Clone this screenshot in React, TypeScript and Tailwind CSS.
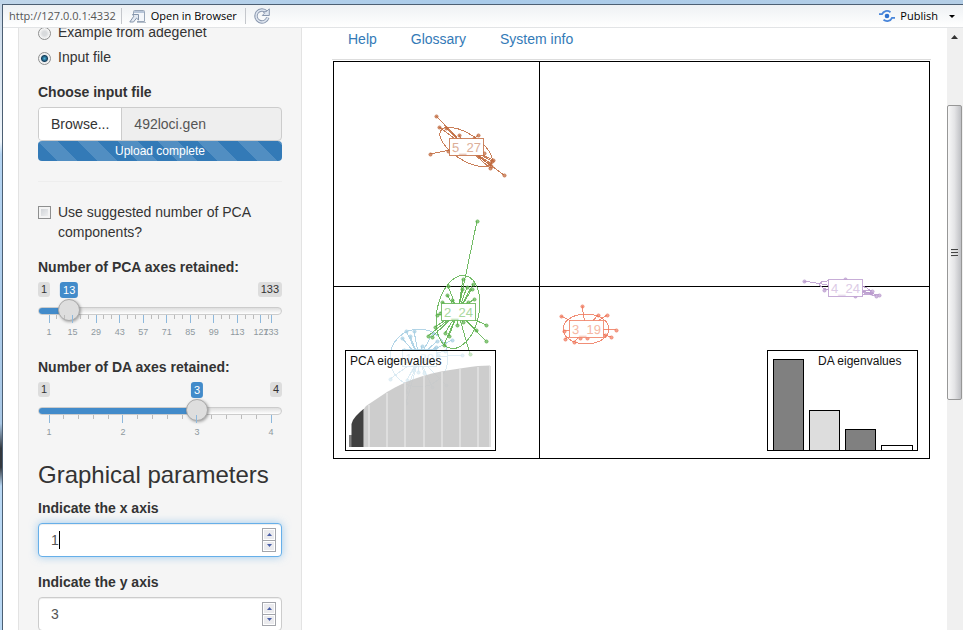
import type { ReactNode } from "react";

type Point = [number, number];

interface Cluster {
  name: string;
  color: string;
  text: string;
  center: Point;
  ellipse: { rx: number; ry: number; angle: number };
  points: Point[];
}

const clusters: Cluster[] = [
  {
    name: "1_39",
    color: "#a6cee3",
    text: "#c4dfec",
    center: [419, 358],
    ellipse: { rx: 29, ry: 29, angle: 0 },
    points: [
      [406, 331], [414, 331], [410, 336], [402, 338], [433, 333], [437, 341],
      [452, 340], [422, 346], [436, 347], [404, 350], [462, 355], [445, 351],
      [438, 355], [390, 379], [407, 380], [446, 385], [432, 387], [406, 392],
      [406, 403], [418, 372], [424, 373], [413, 370],
    ],
  },
  {
    name: "2_24",
    color: "#5cb04c",
    text: "#a8d89d",
    center: [458, 312],
    ellipse: { rx: 37, ry: 21, angle: -78 },
    points: [
      [477, 221], [463, 279], [473, 284], [448, 286], [462, 289], [467, 287],
      [472, 289], [447, 295], [474, 299], [442, 302], [452, 300], [468, 302],
      [437, 315], [440, 313], [486, 325], [486, 341], [476, 330], [470, 354],
      [435, 327], [428, 336], [432, 337], [445, 333], [449, 336], [444, 345],
      [457, 325], [463, 322],
    ],
  },
  {
    name: "3_19",
    color: "#ef7a5e",
    text: "#f6b8a4",
    center: [586, 329],
    ellipse: { rx: 23, ry: 15, angle: 0 },
    points: [
      [582, 306], [561, 316], [598, 315], [607, 315], [564, 331], [565, 339],
      [574, 342], [580, 338], [587, 338], [616, 330], [611, 337], [605, 335],
    ],
  },
  {
    name: "4_24",
    color: "#b999cd",
    text: "#dccbe6",
    center: [845, 288],
    ellipse: { rx: 26, ry: 6, angle: 9 },
    points: [
      [804, 281], [824, 290], [845, 279], [855, 296], [872, 291], [876, 296],
      [879, 295], [871, 293],
    ],
  },
  {
    name: "5_27",
    color: "#c0683c",
    text: "#dcae98",
    center: [466, 147],
    ellipse: { rx: 30, ry: 13, angle: 33 },
    points: [
      [436, 116], [439, 127], [446, 128], [459, 135], [474, 138], [478, 135],
      [430, 154], [448, 151], [484, 153], [493, 160], [490, 168], [504, 175],
      [490, 163], [491, 166], [492, 161],
    ],
  },
];

function ClusterMark({ cluster }: { cluster: Cluster }) {
  const [cx, cy] = cluster.center;
  const { rx, ry, angle } = cluster.ellipse;
  return (
    <g>
      <g stroke={cluster.color} strokeOpacity="0.85" fill="none" shapeRendering="crispEdges">
        {cluster.points.map(([x, y], i) => (
          <line key={i} x1={cx} y1={cy} x2={x} y2={y} />
        ))}
        <ellipse cx={cx} cy={cy} rx={rx} ry={ry} transform={`rotate(${angle} ${cx} ${cy})`} />
      </g>
      {cluster.points.map(([x, y], i) => (
        <circle key={i} cx={x + 0.5} cy={y + 0.5} r="1.6" fill={cluster.color} fillOpacity="0.7" stroke={cluster.color} strokeWidth="0.7" />
      ))}
      <rect x={cx - 16.5} y={cy - 8.5} width="34" height="17" fill="white" stroke={cluster.color} strokeOpacity="0.8" />
      <text x={cx + 0.5} y={cy + 5} fontSize="13" textAnchor="middle" fill={cluster.text} textRendering="geometricPrecision">
        {cluster.name}
      </text>
    </g>
  );
}

const daBars = [
  { x: 773.5, y: 359.5, w: 30, fill: "#808080" },
  { x: 809.5, y: 410.5, w: 30, fill: "#dddddd" },
  { x: 845.5, y: 429.5, w: 30, fill: "#808080" },
  { x: 881.5, y: 445.5, w: 31, fill: "#ffffff" },
];

const pcaStripes = [
  { x: 368, top: 405 },
  { x: 386, top: 393 },
  { x: 404, top: 383 },
  { x: 423, top: 376 },
  { x: 441, top: 372 },
  { x: 459, top: 369 },
  { x: 477, top: 367 },
  { x: 489, top: 366 },
];

function ScatterPlot() {
  return (
    <svg viewBox="332 60 599 400" className="block h-auto w-full" role="img" aria-label="DAPC scatter plot">
      <g stroke="black" fill="none" shapeRendering="crispEdges">
        <rect x="333.5" y="61.5" width="596" height="397" />
        <path d="M539.5 61.5V458.5M333.5 286.5H929.5" />
      </g>
      {clusters.map((c) => (
        <ClusterMark key={c.name} cluster={c} />
      ))}

      <rect x="345.5" y="350.5" width="150" height="100" fill="white" fillOpacity="0.55" />
      <path
        d="M363 447V410L366 406L372 402L378 398L387 392L395 387.500L405 382.500L414 379L423 376L432 373.500L441 371.500L450 370L460 368.500L470 367L478 366L490 365.500V447Z"
        fill="#c6c6c6"
        fillOpacity="0.88"
      />
      {pcaStripes.map(({ x, top }) => (
        <rect key={x} x={x} y={top} width="2" height={447 - top} fill="#dedede" />
      ))}
      <path d="M349 447V435H352V447Z" fill="#7f7f7f" />
      <path d="M351.500 447V424L353 420L356 416L360 412L363.500 409V447Z" fill="#404040" />
      <path d="M363.500 447V409" stroke="#8c8c8c" />
      <rect x="345.5" y="350.5" width="150" height="100" fill="none" stroke="black" shapeRendering="crispEdges" />
      <text x="350" y="365" fontSize="12" fill="#111">PCA eigenvalues</text>

      <g stroke="black" shapeRendering="crispEdges">
        <rect x="767.5" y="350.5" width="150" height="100" fill="white" />
        {daBars.map((b) => (
          <rect key={b.x} x={b.x} y={b.y} width={b.w} height={450.5 - b.y} fill={b.fill} />
        ))}
      </g>
      <text x="818" y="365" fontSize="12" fill="#111">DA eigenvalues</text>
    </svg>
  );
}

interface SliderProps {
  id: string;
  label: string;
  min: number;
  max: number;
  value: number;
  major: number[];
  minor: number;
}

function Slider({ id, label, min, max, value, major, minor }: SliderProps) {
  const share = (v: number) => ((v - min) / (max - min)) * 100;
  const step = major[1] - major[0];
  const minors: number[] = [];
  major.forEach((m) => {
    for (let i = 1; i <= minor; i++) {
      const v = m + (step * i) / (minor + 1);
      if (v < max) minors.push(v);
    }
  });
  const labels = major.includes(max) ? major : [...major, max];
  return (
    <div className="h-[85px]">
      <label htmlFor={id} className="mb-[5px] block font-bold">{label}</label>
      <div className="relative flex justify-between text-[11px] leading-[15px]">
        <span className="rounded-[3px] bg-[#ddd] px-[3px]">{min}</span>
        <span className="rounded-[3px] bg-[#ddd] px-[3px]">{max}</span>
        <div className="absolute inset-x-[11px] top-0">
          <output
            htmlFor={id}
            className="absolute -translate-x-1/2 rounded-[3px] bg-[#428bca] px-[3px] leading-4 text-white"
            style={{ left: `${share(value)}%` }}
          >
            {value}
          </output>
        </div>
      </div>
      <div className="mt-[2px] grid h-[22px] items-center">
        <div className="col-start-1 row-start-1 mt-[2px] h-2 overflow-hidden rounded-lg border border-[#ccc] bg-linear-to-b from-[#dedede] to-white">
          <div className="-mt-px h-2 bg-[#428bca]" style={{ width: `${share(value)}%` }} />
        </div>
        <input
          id={id}
          type="range"
          min={min}
          max={max}
          defaultValue={value}
          className="col-start-1 row-start-1 m-0 h-[22px] w-full appearance-none bg-transparent [&::-webkit-slider-thumb]:size-[22px] [&::-webkit-slider-thumb]:appearance-none [&::-webkit-slider-thumb]:rounded-full [&::-webkit-slider-thumb]:border [&::-webkit-slider-thumb]:border-[#aaa] [&::-webkit-slider-thumb]:bg-[#dedede] [&::-webkit-slider-thumb]:shadow-[1px_1px_3px_rgba(0,0,0,0.35)]"
        />
      </div>
      <div className="-mt-[6px] px-[11px]">
        <svg className="block h-6 w-full overflow-visible text-[9px]" aria-hidden="true">
          <g shapeRendering="crispEdges">
            {minors.map((v) => (
              <line key={v} x1={`${share(v)}%`} x2={`${share(v)}%`} y1="0" y2="4" stroke="#bbb" />
            ))}
            {labels.map((v) => (
              <line key={v} x1={`${share(v)}%`} x2={`${share(v)}%`} y1="0" y2="8" stroke="#8db8dc" />
            ))}
          </g>
          {labels.map((v) => (
            <text key={v} x={`${share(v)}%`} y="20" textAnchor="middle" fill="#8f999f">{v}</text>
          ))}
        </svg>
      </div>
    </div>
  );
}

function NumberField({ id, label, value, focused = false }: { id: string; label: string; value: number; focused?: boolean }) {
  return (
    <div className="mb-[15px]">
      <label htmlFor={id} className="mb-[5px] block font-bold">{label}</label>
      <div
        className={
          focused
            ? "relative flex h-[34px] items-center rounded-[4px] border border-[#66afe9] bg-white pl-3 pr-[5px] shadow-[inset_0_1px_1px_rgba(0,0,0,0.075),0_0_8px_rgba(102,175,233,0.6)]"
            : "relative flex h-[34px] items-center rounded-[4px] border border-[#ccc] bg-white pl-3 pr-[5px] shadow-[inset_0_1px_1px_rgba(0,0,0,0.075)]"
        }
      >
        <input
          id={id}
          type="number"
          defaultValue={value}
          className="min-w-0 flex-1 appearance-none bg-transparent text-[#555] caret-transparent outline-none [-moz-appearance:textfield] [&::-webkit-inner-spin-button]:appearance-none"
        />
        {focused && <span className="absolute left-5 top-[7px] h-[18px] w-px bg-black" />}
        <div className="flex h-6 w-[14px] flex-col border border-[#a3a5ab] bg-[#a3a5ab]">
          {[true, false].map((up) => (
            <button
              key={String(up)}
              type="button"
              aria-label={up ? "Increase" : "Decrease"}
              className="flex flex-1 items-center justify-center border border-white bg-[#ebebee] not-first:mt-px"
            >
              <svg viewBox="0 0 5 3" className="h-[3px] w-[5px]">
                <path d={up ? "M0 3L2.500 0L5 3Z" : "M0 0L2.500 3L5 0Z"} fill="#4a5fa8" />
              </svg>
            </button>
          ))}
        </div>
      </div>
    </div>
  );
}

function RadioRow({ label, checked = false }: { label: string; checked?: boolean }) {
  return (
    <label className="mb-[5px] flex h-5 items-center gap-[7px]">
      <input
        type="radio"
        name="dataset"
        defaultChecked={checked}
        className="mt-[2px] size-[13px] appearance-none rounded-full border border-[#8e8f8f] bg-[radial-gradient(circle,#d8dadc_0_2px,#f4f4f4_5px)] shadow-[inset_0_0_0_1px_#f4f4f4] checked:bg-[radial-gradient(circle,#4fb4dc_0,#12405f_3px,#173f5c_3px,#e8eaec_4px)]"
      />
      <span>{label}</span>
    </label>
  );
}

function Divider() {
  return <span className="h-4 w-px bg-[#c4c7cc]" />;
}

function Toolbar() {
  return (
    <header className="flex h-[23px] shrink-0 items-center border-b border-[#e2e4e6] bg-linear-to-b from-[#eef1f4] to-white pl-[6px] pr-2 font-['Open_Sans','Noto_Sans',sans-serif] text-[11px] text-black">
      <span className="mr-[5px] text-[#555]">http://127.0.0.1:4332</span>
      <Divider />
      <button type="button" className="ml-[7px] mr-2 flex items-center gap-[5px]">
        <svg viewBox="0 0 17 13" className="h-[13px] w-[17px]" fill="none">
          <path d="M4.500 4V1.500Q4.500 .5 5.500 .5H14.500Q15.500 .5 15.500 1.500V11.500H8" fill="#f3f6fa" stroke="#98a6b8" />
          <path d="M5 2H15" stroke="#b7c5d8" strokeWidth="2" />
          <path d="M3.500 4.500H9.500V10L7.500 8.200L4.500 12H.8L4.800 6.200Z" fill="#e3e9f1" stroke="#8494aa" />
          <path d="M8 12.500H17" stroke="#b6bfca" />
        </svg>
        Open in Browser
      </button>
      <Divider />
      <button type="button" aria-label="Refresh" className="ml-2">
        <svg viewBox="0 0 16 16" className="size-4" fill="none">
          <path d="M12.500 4A6 6 0 1 0 13.800 9.500" stroke="#8997ae" strokeWidth="3.400" />
          <path d="M12.500 4A6 6 0 1 0 13.800 9.500" stroke="#dfe6f0" strokeWidth="1.600" />
          <path d="M15.300 .8V7.500H8.300L10.500 5.200L9.500 4.200L12.800 3.300Z" fill="#dfe6f0" stroke="#8997ae" />
        </svg>
      </button>
      <button type="button" className="ml-auto flex items-center gap-[5px]">
        <svg viewBox="0 0 16 12" className="h-3 w-4" fill="none" stroke="#4a86da" strokeWidth="1.800">
          <circle cx="8" cy="6" r="2.300" fill="#2f72d0" stroke="none" />
          <path d="M0 4.200H3C4.500 .8 8.500 0 11.500 2.200" />
          <path d="M16 7.800H13C11.500 11.200 7.500 12 4.500 9.800" />
        </svg>
        Publish
        <svg viewBox="0 0 6 3" className="ml-[6px] h-[3px] w-[6px]"><path d="M0 0H6L3 3Z" fill="black" /></svg>
      </button>
    </header>
  );
}

function Sidebar() {
  return (
    <aside className="ml-[15px] w-[284px] shrink-0 overflow-hidden border-x border-[#e3e3e3] bg-[#f5f5f5] px-[19px]">
      <div className="-mt-[6px] mb-[15px]">
        <RadioRow label="Example from adegenet" />
        <RadioRow label="Input file" checked />
      </div>
      <label htmlFor="file-name" className="mb-[5px] block font-bold">Choose input file</label>
      <div className="flex h-[34px] rounded-[4px] border border-[#ccc] bg-[#eee]">
        <button type="button" className="rounded-l-[3px] border-r border-[#ccc] bg-white px-3">Browse...</button>
        <input id="file-name" readOnly value="492loci.gen" className="min-w-0 flex-1 bg-transparent px-3 text-[#555] outline-none" />
      </div>
      <div className="h-5 rounded-[4px] bg-[#337ab7] bg-[linear-gradient(45deg,rgba(255,255,255,0.15)_25%,transparent_25%,transparent_50%,rgba(255,255,255,0.15)_50%,rgba(255,255,255,0.15)_75%,transparent_75%,transparent)] bg-size-[40px_40px] text-center text-xs leading-5 text-white">
        Upload complete
      </div>
      <hr className="my-5 border-[#eee]" />
      <label className="mb-[15px] flex items-start gap-[7px]">
        <input
          type="checkbox"
          className="mt-1 size-[13px] shrink-0 appearance-none border border-[#8e8f8f] bg-linear-to-br from-[#c9cdd2] to-[#f6f6f6] shadow-[inset_0_0_0_2px_#f4f4f4] checked:bg-[#337ab7]"
        />
        <span>Use suggested number of PCA components?</span>
      </label>
      <div className="flex flex-col gap-[15px]">
        <Slider id="pca-axes" label="Number of PCA axes retained:" min={1} max={133} value={13} major={[1, 15, 29, 43, 57, 71, 85, 99, 113, 127]} minor={2} />
        <Slider id="da-axes" label="Number of DA axes retained:" min={1} max={4} value={3} major={[1, 2, 3, 4]} minor={4} />
      </div>
      <h3 className="mb-[10px] mt-5 text-2xl leading-[26px]">Graphical parameters</h3>
      <NumberField id="x-axis" label="Indicate the x axis" value={1} focused />
      <NumberField id="y-axis" label="Indicate the y axis" value={3} />
    </aside>
  );
}

function TabLink({ children }: { children: ReactNode }) {
  return <a href="#" className="px-4 leading-5 text-[#337ab7]">{children}</a>;
}

function Scrollbar() {
  return (
    <div className="flex w-4 shrink-0 flex-col items-center bg-[#f0f0f0] pr-px">
      <button type="button" aria-label="Scroll up" className="flex h-[17px] w-full items-center justify-center">
        <svg viewBox="0 0 7 4" className="h-1 w-[7px]"><path d="M0 4L3.500 0L7 4Z" fill="#333" /></svg>
      </button>
      <div className="mt-[60px] flex h-[295px] w-full flex-col items-center justify-center gap-px rounded-xs border border-[#979797] bg-linear-to-r from-[#f8f8f8] via-[#e4e4e6] to-[#bfc0c4]">
        <span className="h-[2px] w-[7px] border-t border-[#444] bg-[#ddd]" />
        <span className="h-[2px] w-[7px] border-t border-[#444] bg-[#ddd]" />
        <span className="h-[2px] w-[7px] border-t border-[#444] bg-[#ddd]" />
      </div>
    </div>
  );
}

export default function App() {
  return (
    <div className="flex h-screen flex-col overflow-hidden bg-white font-['Liberation_Sans',Arial,sans-serif] text-sm leading-5 text-[#333]">
      <div className="h-1 shrink-0 bg-linear-to-r from-[#c0d6ea] via-[#a9cbea] to-[#b4cee6]" />
      <div className="flex min-h-0 flex-1">
        <div className="w-[2px] shrink-0 bg-[linear-gradient(#c8d8e8,#f0f6fb_22%,#b4d4f2_24%,#a9c8e6_67%,#33383e_71%,#33383e_74%,#b9d8f4_77%,#b9d8f4)]" />
        <div className="flex min-w-0 flex-1 flex-col border-l border-t border-[#4c5f73]">
          <Toolbar />
          <div className="flex min-h-0 flex-1">
            <Sidebar />
            <main className="min-w-0 flex-1 pl-[30px] pr-4">
              <nav className="flex h-8 gap-[2px] border-b border-[#ddd] pt-px">
                <TabLink>Help</TabLink>
                <TabLink>Glossary</TabLink>
                <TabLink>System info</TabLink>
              </nav>
              <ScatterPlot />
            </main>
            <Scrollbar />
          </div>
        </div>
      </div>
    </div>
  );
}
